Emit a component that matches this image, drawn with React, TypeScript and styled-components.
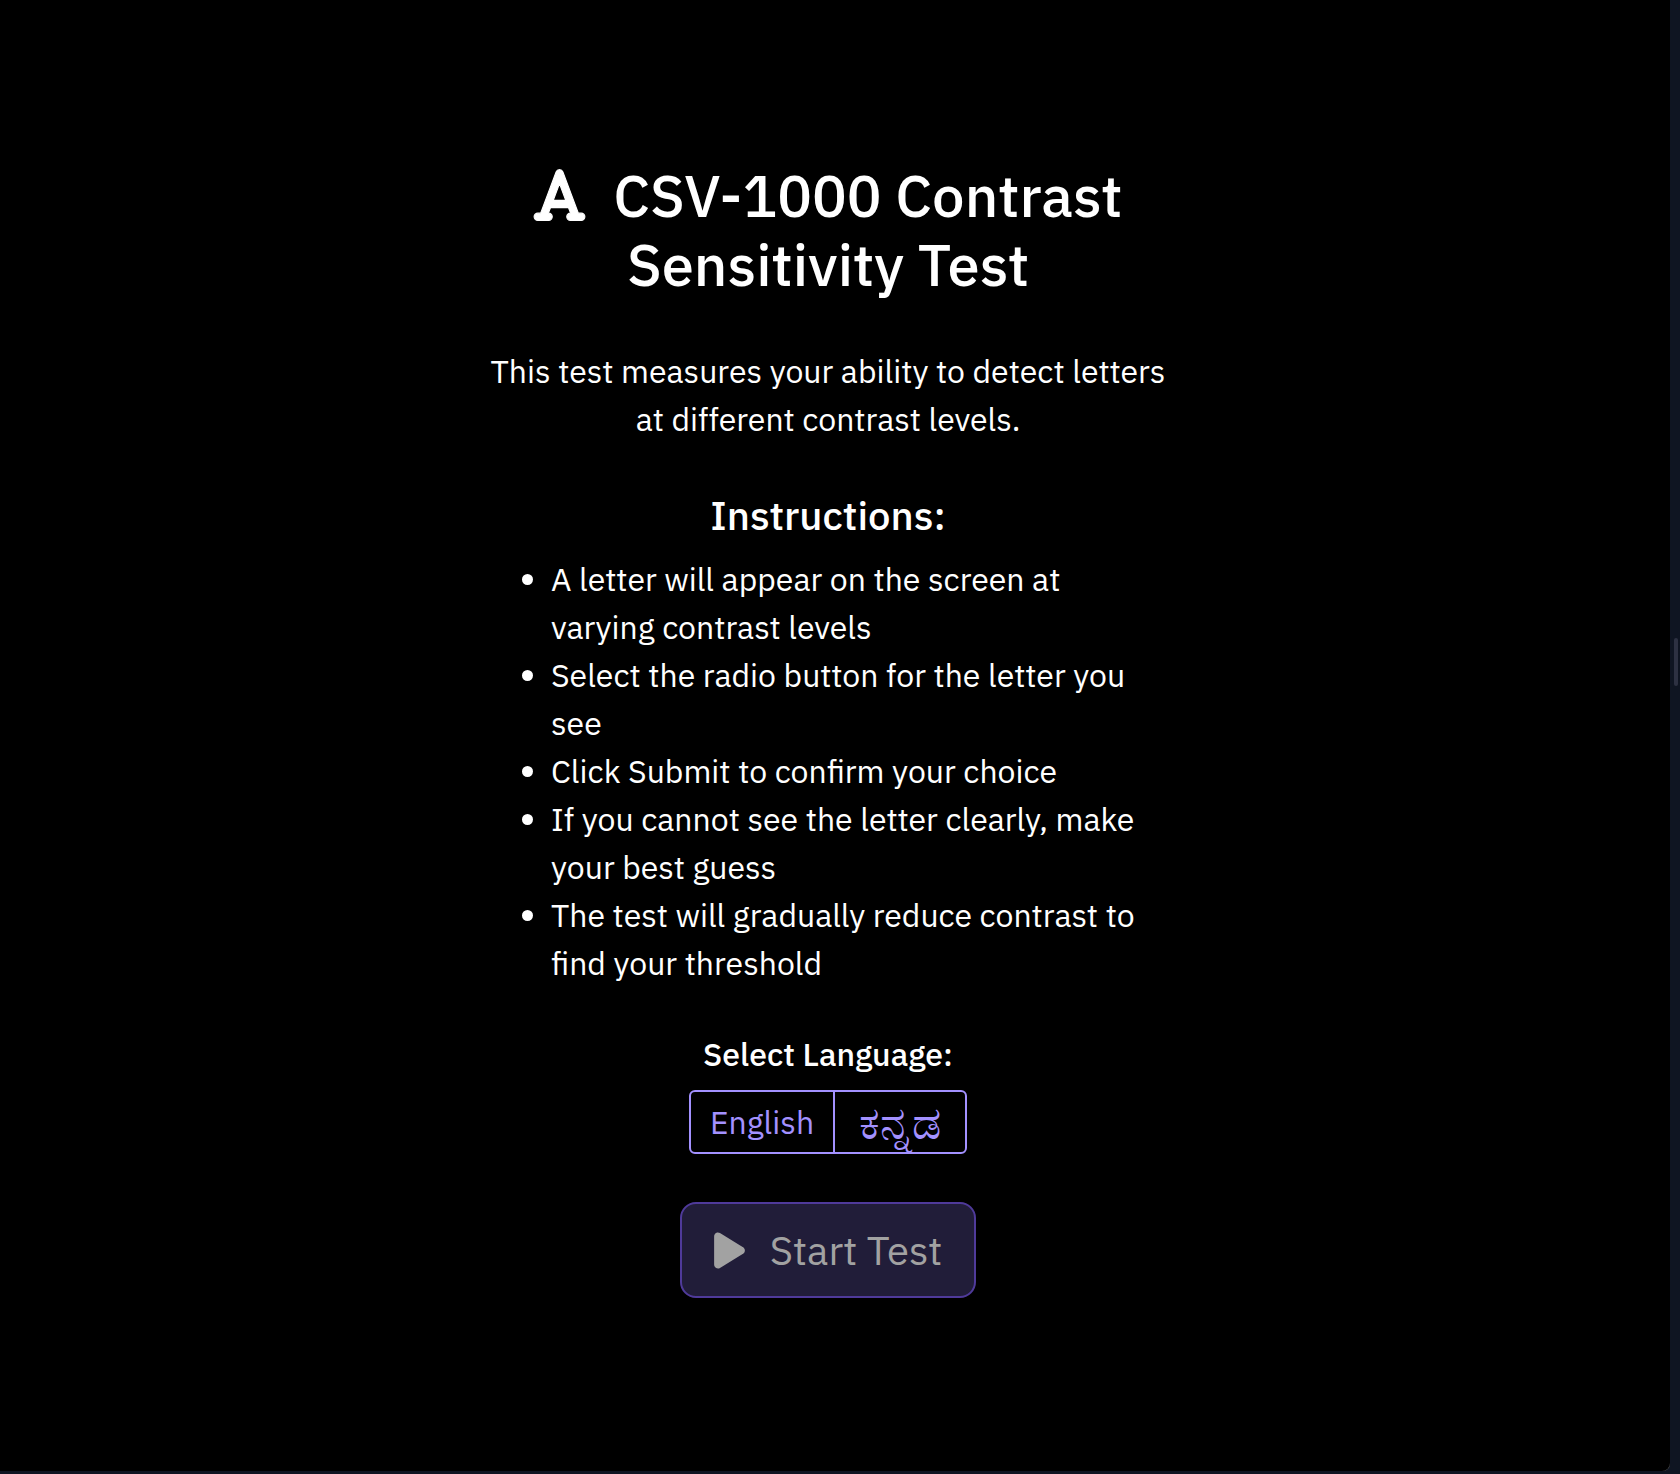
import React, { useState } from 'react';
import styled, { createGlobalStyle } from 'styled-components';
import { FaFont, FaPlay } from 'react-icons/fa6';

const GlobalStyle = createGlobalStyle`
  *, *::before, *::after { box-sizing: border-box; }
  body {
    margin: 0;
    background: #0f1522;
    color: #fff;
    font: 400 32px/48px "IBM Plex Sans", Roboto, sans-serif;
  }
  button { font: inherit; }
`;

const Frame = styled.div`
  display: grid;
  grid-template-columns: 1fr 10px;
  min-height: 100vh;
  padding-bottom: 3px;
`;

const Screen = styled.main`
  display: flex;
  flex-direction: column;
  align-items: center;
  padding: 161px 14px 160px 0;
  background: #000;
  border-bottom-right-radius: 8px;
  box-shadow: 1px 1px 0 -1px #555;
`;

const Gutter = styled.div`
  display: flex;
  align-items: center;
  justify-content: center;
  padding: 0 2px 148px 4px;
`;

const Grip = styled.div`
  width: 4px;
  height: 48px;
  border-radius: 2px;
  background: #2d3142;
`;

const Content = styled.div`
  display: flex;
  flex-direction: column;
  align-items: center;
  width: 100%;
  max-width: 682px;
  text-align: center;
`;

const Title = styled.h1`
  margin: 0 0 48px;
  font-size: 58px;
  font-weight: 500;
  line-height: 69px;
`;

const TitleIcon = styled(FaFont)`
  width: 51px;
  height: 58px;
  margin-right: 15px;
  overflow: visible;
  vertical-align: -7px;

  path { stroke: currentColor; stroke-width: 10px; }
`;

const Intro = styled.p`
  margin: 0 0 48px;
`;

const Subtitle = styled.h2`
  margin: 0 0 16px;
  font-size: 40px;
  font-weight: 500;
  line-height: 48px;
`;

const Instructions = styled.ul`
  align-self: stretch;
  margin: 0 0 43px;
  padding: 0 0 0 64px;
  text-align: left;
`;

const Languages = styled.fieldset`
  display: flex;
  flex-direction: column;
  align-items: center;
  min-width: 0;
  margin: 0 0 48px;
  padding: 0;
  border: 0;
`;

const LanguagesLabel = styled.legend`
  margin: 0 auto 12px;
  padding: 0;
  font-weight: 500;
`;

const ButtonGroup = styled.div`
  display: flex;
`;

const LanguageButton = styled.button<{ $script?: boolean }>`
  display: flex;
  align-items: center;
  justify-content: center;
  min-width: 134px;
  height: 64px;
  padding: 0 19px;
  border: 2px solid #a391ff;
  background: transparent;
  color: #a391ff;
  font-size: ${p => (p.$script ? 46 : 32)}px;
  cursor: pointer;

  &:first-child { border-radius: 6px 0 0 6px; }
  &:last-child { border-radius: 0 6px 6px 0; }
  & + & { margin-left: -2px; }
  &[aria-pressed='true'] { background: #2b2350; }
`;

const StartButton = styled.button`
  display: flex;
  align-items: center;
  gap: 25px;
  padding: 22px 32px;
  border: 2px solid #4f3a9a;
  border-radius: 16px;
  background: #211d39;
  color: #a2a2a2;
  font-size: 40px;
`;

const PlayIcon = styled(FaPlay)`
  width: 31px;
  height: 41px;
`;

const steps = [
  'A letter will appear on the screen at varying contrast levels',
  'Select the radio button for the letter you see',
  'Click Submit to confirm your choice',
  'If you cannot see the letter clearly, make your best guess',
  'The test will gradually reduce contrast to find your threshold',
];

export default function App() {
  const [language, setLanguage] = useState<'en' | 'kn' | null>(null);

  return (
    <>
      <GlobalStyle />
      <Frame>
        <Screen>
          <Content>
            <Title>
              <TitleIcon aria-hidden /> CSV-1000 Contrast Sensitivity Test
            </Title>
            <Intro>This test measures your ability to detect letters at different contrast levels.</Intro>
            <Subtitle>Instructions:</Subtitle>
            <Instructions>
              {steps.map(step => (
                <li key={step}>{step}</li>
              ))}
            </Instructions>
            <Languages>
              <LanguagesLabel>Select Language:</LanguagesLabel>
              <ButtonGroup>
                <LanguageButton type="button" aria-pressed={language === 'en'} onClick={() => setLanguage('en')}>
                  English
                </LanguageButton>
                <LanguageButton type="button" lang="kn" $script aria-pressed={language === 'kn'} onClick={() => setLanguage('kn')}>
                  ಕನ್ನಡ
                </LanguageButton>
              </ButtonGroup>
            </Languages>
            <StartButton type="button" disabled={language === null}>
              <PlayIcon aria-hidden />
              Start Test
            </StartButton>
          </Content>
        </Screen>
        <Gutter>
          <Grip />
        </Gutter>
      </Frame>
    </>
  );
}
